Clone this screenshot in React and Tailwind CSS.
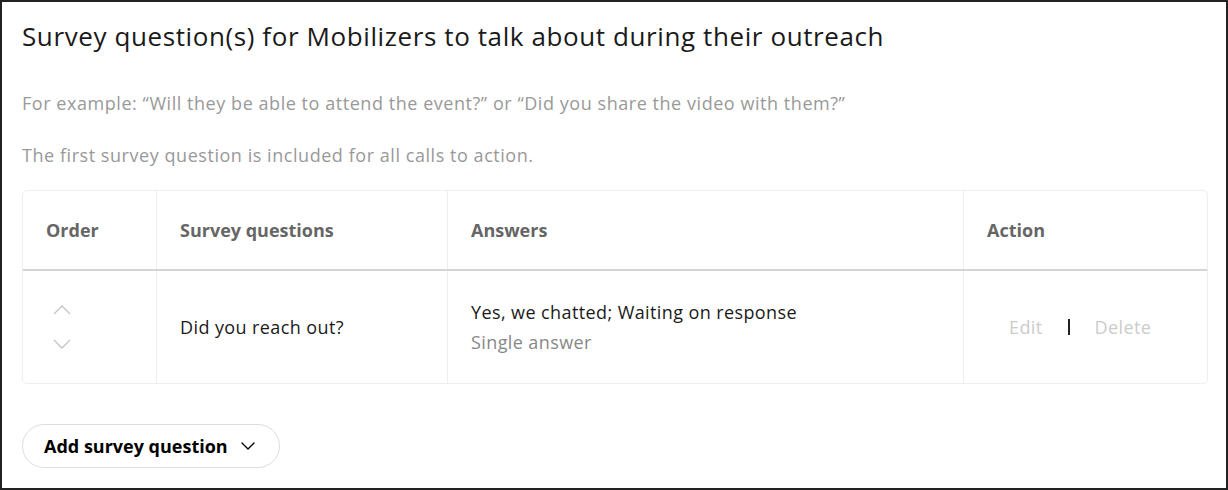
import { ChevronDown } from "lucide-react";

const font = { fontFamily: "'Open Sans', 'Noto Sans', sans-serif" };

function Caret({ up }) {
  return (
    <svg width="18" height="10" viewBox="0 0 18 10" fill="none" stroke="#c4c4c4" strokeWidth="1.3">
      <polyline points={up ? "1,9 9,1 17,9" : "1,1 9,9 17,1"} />
    </svg>
  );
}

export default function App() {
  return (
    <div
      className="w-[1228px] h-[490px] border-2 border-[#222] bg-white px-[20px] pt-[16px] text-[#222]"
      style={font}
    >
      <h1 className="text-[26px] leading-[36px] font-normal tracking-[0.6px] text-[#1a1a1a]">
        Survey question(s) for Mobilizers to talk about during their outreach
      </h1>
      <p className="mt-[37px] text-[18px] leading-[24px] tracking-[0.55px] text-[#999]">
        For example: “Will they be able to attend the event?” or “Did you share the video with them?”
      </p>
      <p className="mt-[28px] text-[18px] leading-[24px] tracking-[0.55px] text-[#999]">
        The first survey question is included for all calls to action.
      </p>

      <div className="mt-[23px] w-[1186px] rounded-[5px] border border-[#eee]">
        <div className="grid grid-cols-[133px_291px_516px_1fr] h-[80px] border-b-2 border-[#d4d4d4] text-[18px] font-bold text-[#666]">
          <div className="flex items-center pl-[23px]">Order</div>
          <div className="flex items-center pl-[23px] border-l border-[#eee]">Survey questions</div>
          <div className="flex items-center pl-[23px] border-l border-[#eee]">Answers</div>
          <div className="flex items-center pl-[23px] border-l border-[#eee]">Action</div>
        </div>
        <div className="grid grid-cols-[133px_291px_516px_1fr] h-[112px] text-[18px] tracking-[0.4px]">
          <div className="flex flex-col justify-center pl-[30px] gap-[24px]">
            <Caret up />
            <Caret />
          </div>
          <div className="flex items-center pl-[23px] border-l border-[#eee] text-[#1a1a1a]">
            Did you reach out?
          </div>
          <div className="flex flex-col justify-center pl-[23px] border-l border-[#eee] leading-[30px]">
            <span className="text-[#1a1a1a]">Yes, we chatted; Waiting on response</span>
            <span className="text-[#888]">Single answer</span>
          </div>
          <div className="flex items-center pl-[45px] border-l border-[#eee]">
            <button className="text-[#ccc]">Edit</button>
            <span className="mx-[25px] w-[2px] h-[16px] bg-[#222]"></span>
            <button className="text-[#ccc]">Delete</button>
          </div>
        </div>
      </div>

      <button className="mt-[40px] flex items-center gap-[8px] h-[44px] pl-[21px] pr-[19px] rounded-full border border-[#ddd] text-[18px] font-bold text-black">
        Add survey question
        <ChevronDown size={24} strokeWidth={1.4} />
      </button>
    </div>
  );
}
